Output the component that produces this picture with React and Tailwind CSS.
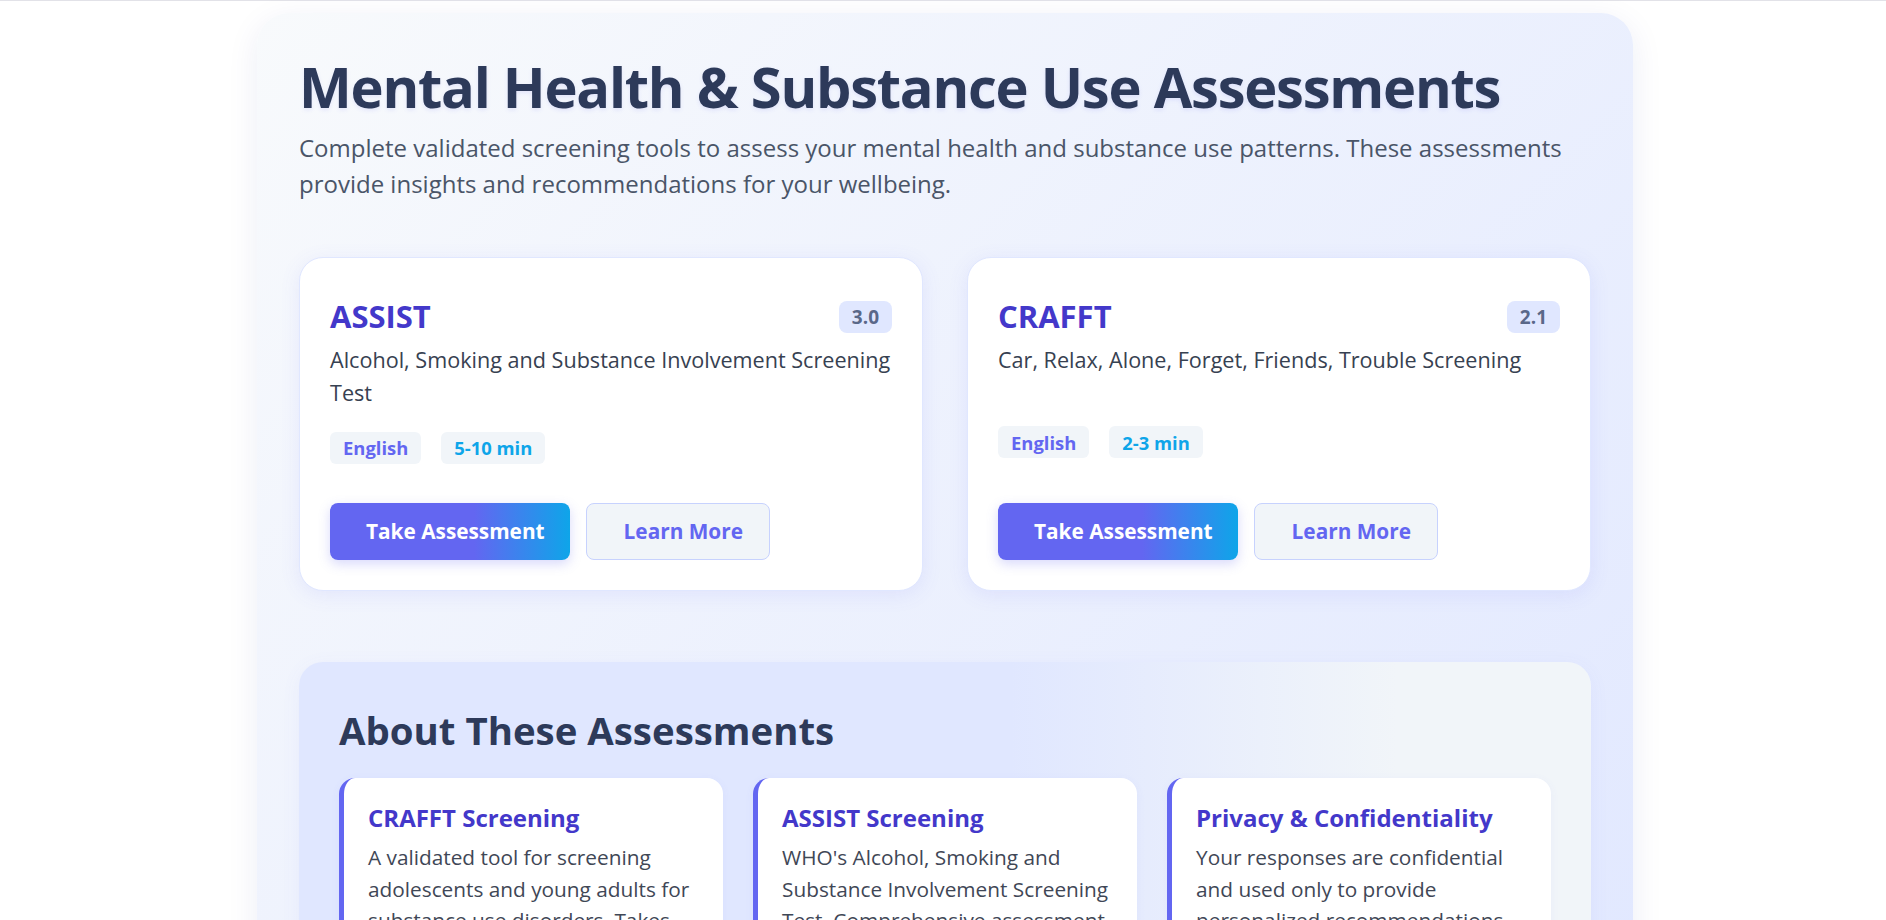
import React from 'react';

const assessments = [
  {
    name: 'ASSIST',
    version: '3.0',
    description: 'Alcohol, Smoking and Substance Involvement Screening Test',
    language: 'English',
    duration: '5-10 min',
  },
  {
    name: 'CRAFFT',
    version: '2.1',
    description: 'Car, Relax, Alone, Forget, Friends, Trouble Screening',
    language: 'English',
    duration: '2-3 min',
  },
];

const about = [
  {
    title: 'CRAFFT Screening',
    text: 'A validated tool for screening adolescents and young adults for substance use disorders. Takes about 2-3 minutes to complete.',
  },
  {
    title: 'ASSIST Screening',
    text: "WHO's Alcohol, Smoking and Substance Involvement Screening Test. Comprehensive assessment of substance use across multiple categories.",
  },
  {
    title: 'Privacy & Confidentiality',
    text: 'Your responses are confidential and used only to provide personalized recommendations and insights for your wellbeing.',
  },
];

function AssessmentCard({ item }) {
  return (
    <div className="flex flex-col rounded-3xl border border-[#e0e7ff] bg-white px-[30px] pt-10 pb-[30px] shadow-[0_4px_20px_rgba(99,102,241,0.10)]">
      <div className="mb-[9px] flex items-center justify-between">
        <h3 className="text-[31px] font-bold leading-[1.2] text-[#4338ca]">{item.name}</h3>
        <span className="flex h-8 items-center rounded-lg bg-[#e0e7ff] px-[13px] text-[19px] font-bold text-[#5a6889]">
          {item.version}
        </span>
      </div>
      <p className="mb-[23px] min-h-[59px] text-[21.6px] leading-[1.5] text-[#374151]">{item.description}</p>
      <div className="mb-[39px] flex gap-5">
        <span className="flex h-8 items-center rounded-md bg-[#f1f5f9] px-[13px] text-[18.4px] font-bold text-[#6366f1]">
          {item.language}
        </span>
        <span className="flex h-8 items-center rounded-md bg-[#f1f5f9] px-[13px] text-[18.4px] font-bold text-[#0ea5e9]">
          {item.duration}
        </span>
      </div>
      <div className="mt-auto flex gap-4">
        <button className="h-[57px] rounded-lg bg-[linear-gradient(90deg,#6366f1_60%,#0ea5e9)] pl-9 pr-[25px] text-[20.8px] font-bold text-white shadow-[0_4px_12px_rgba(99,102,241,0.25)]">
          Take Assessment
        </button>
        <button className="h-[57px] rounded-lg border border-[#c7d2fe] bg-[#f1f5f9] pl-[37px] pr-[26px] text-[20.8px] font-bold text-[#6366f1]">
          Learn More
        </button>
      </div>
    </div>
  );
}

export default function App() {
  return (
    <div className="min-h-screen border-t border-[#e2e2e8] bg-white font-['Open_Sans',sans-serif]">
      <div className="flex justify-center pt-3 pl-1">
        <div className="w-[1376px] rounded-[32px] bg-[linear-gradient(135deg,#f8fafc,#e0e7ff)] px-[42px] pt-10 pb-10 shadow-[0_8px_32px_rgba(31,38,135,0.08)]">
          <h1 className="mb-[10px] text-[56px] font-bold leading-[1.2] tracking-[-0.022em] text-[#2d3a5a] [text-shadow:0_2px_4px_rgba(99,102,241,0.12)]">
            Mental Health &amp; Substance Use Assessments
          </h1>
          <p className="mb-[55px] text-[24px] leading-[1.5] text-[#4a5568]">
            Complete validated screening tools to assess your mental health and substance use patterns. These assessments
            provide insights and recommendations for your wellbeing.
          </p>

          <div className="mb-[71px] grid grid-cols-2 gap-[44px]">
            {assessments.map(item => (
              <AssessmentCard key={item.name} item={item} />
            ))}
          </div>

          <div className="rounded-3xl bg-[linear-gradient(90deg,#e0e7ff_55%,#f1f5f9_85%)] px-10 pt-[45px] pb-10 shadow-[0_4px_20px_rgba(99,102,241,0.06)]">
            <h2 className="mb-[25px] text-[38.4px] font-bold leading-[1.2] text-[#2d3a5a]">About These Assessments</h2>
            <div className="grid grid-cols-3 gap-[30px]">
              {about.map(card => (
                <div
                  key={card.title}
                  className="rounded-2xl border-l-[5px] border-[#6366f1] bg-white pt-6 pr-6 pb-6 pl-6 shadow-[0_2px_10px_rgba(99,102,241,0.06)]"
                >
                  <h4 className="mb-[9px] text-[24px] font-bold leading-[1.3] text-[#4338ca]">{card.title}</h4>
                  <p className="text-[20.8px] leading-[1.5] text-[#3f4756]">{card.text}</p>
                </div>
              ))}
            </div>
          </div>
        </div>
      </div>
    </div>
  );
}
